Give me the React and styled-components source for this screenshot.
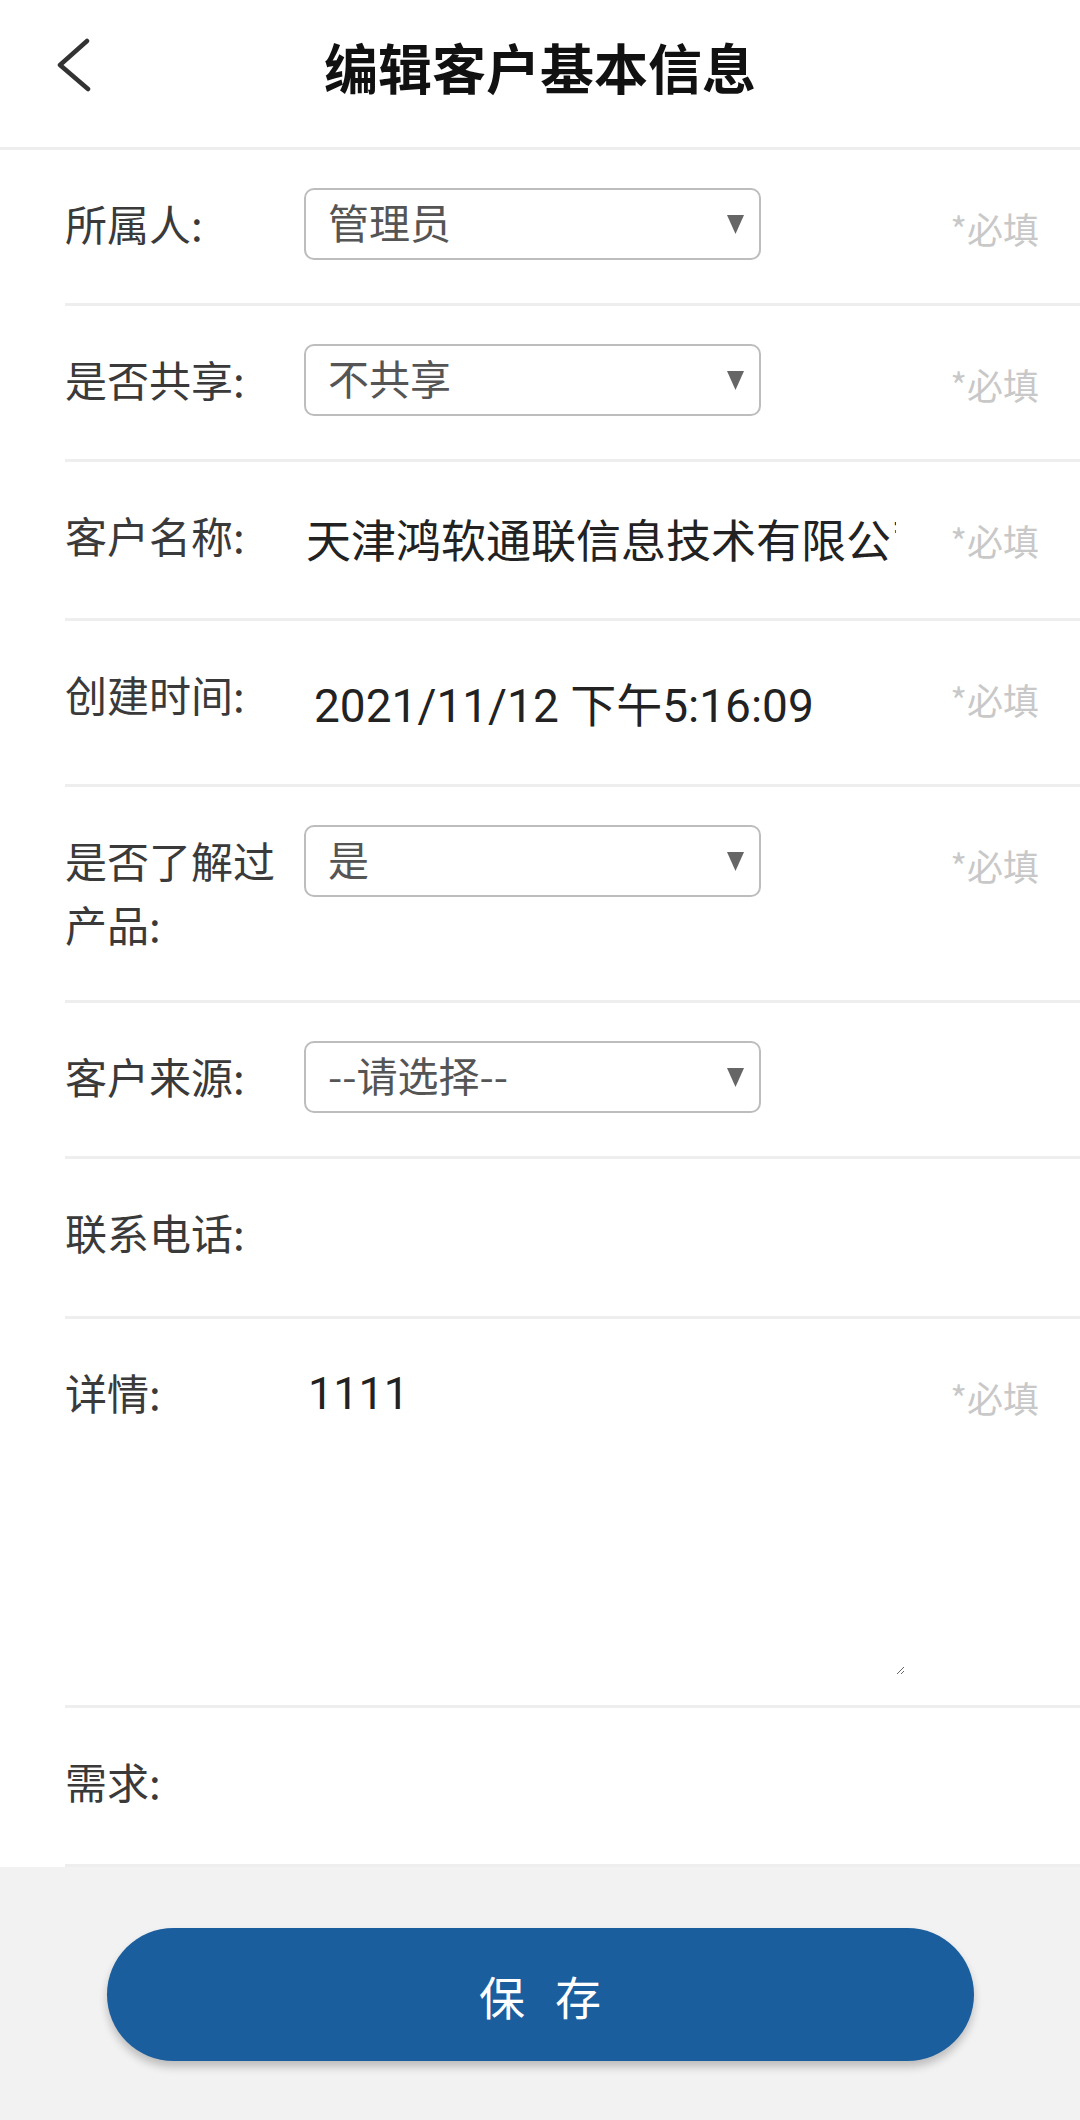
import React from 'react';
import styled, { createGlobalStyle } from 'styled-components';

const GlobalStyle = createGlobalStyle`
  body {
    margin: 0;
    background: #f2f2f2;
    font-family: "Noto Sans CJK SC", "Noto Sans", sans-serif;
  }
`;

const Page = styled.div`
  min-height: 100vh;
  background: #f2f2f2;
`;

const Header = styled.header`
  display: grid;
  grid-template-columns: 1fr auto 1fr;
  align-items: center;
  height: 147px;
  background: #fff;
  border-bottom: 3px solid #eeeeee;
`;

const BackButton = styled.button`
  justify-self: start;
  display: flex;
  margin: 0 0 15px 57px;
  padding: 0;
  border: none;
  background: transparent;
  cursor: pointer;
`;

const Title = styled.h1`
  margin: 0 0 15px;
  font-size: 54px;
  font-weight: 700;
  color: #111;
`;

const Form = styled.div`
  background: #fff;
`;

const Row = styled.div`
  display: flex;
  align-items: flex-start;
  margin-left: 65px;
  padding: 38px 0 ${(p) => p.$pb || 43}px;
  border-bottom: 3px solid #eeeeee;
`;

const Label = styled.div`
  flex: 0 0 239px;
  width: 239px;
  margin-top: 3px;
  font-size: 42px;
  line-height: 64px;
  color: #3a3a3a;
`;

const SelectBox = styled.div`
  display: flex;
  align-items: center;
  box-sizing: border-box;
  width: 457px;
  height: 72px;
  padding: 0 15px 6px 22px;
  border: 2px solid #bdbdbd;
  border-radius: 10px;
  font-size: 41px;
  color: #555;
`;

const Arrow = styled.svg`
  margin: 6px 0 0 auto;
  flex: none;
`;

const TextInput = styled.input`
  box-sizing: border-box;
  width: ${(p) => p.$w || 592}px;
  height: ${(p) => p.$h || 75}px;
  padding: ${(p) => p.$pt || 1}px 0 0 ${(p) => p.$pl || 2}px;
  border: none;
  outline: none;
  background: transparent;
  font-family: "Roboto", "Noto Sans CJK SC", sans-serif;
  font-size: ${(p) => p.$fs || 45}px;
  color: #222;
`;

const TextArea = styled.textarea`
  box-sizing: border-box;
  width: 601px;
  height: 318px;
  padding: 10px 4px;
  border: none;
  outline: none;
  background: transparent;
  font-family: "Roboto", "Noto Sans CJK SC", sans-serif;
  font-size: 45px;
  color: #222;
`;

const Required = styled.span`
  margin: 15px 41px 0 auto;
  font-size: 36px;
  line-height: 50px;
  color: #c8c8c8;
  white-space: nowrap;
`;

const Footer = styled.div`
  display: flex;
  justify-content: center;
  padding: 61px 0 60px;
`;

const SaveButton = styled.button`
  width: 867px;
  height: 133px;
  padding: 0 0 0 30px;
  border: none;
  border-radius: 67px;
  background: #1b5e9e;
  box-shadow: 0 6px 9px rgba(0, 0, 0, 0.22);
  color: #fff;
  font-family: "Noto Sans CJK SC", sans-serif;
  font-size: 46px;
  letter-spacing: 30px;
  cursor: pointer;
`;

const Select = ({ value }) => (
  <SelectBox>
    <span>{value}</span>
    <Arrow width="17" height="19" viewBox="0 0 17 19">
      <polygon points="0,0 17,0 8.5,19" fill="#666" />
    </Arrow>
  </SelectBox>
);

const App = () => {
  return (
    <Page>
      <GlobalStyle />
      <Header>
        <BackButton aria-label="返回">
          <svg width="36" height="56" viewBox="0 0 36 56">
            <polyline
              points="30,3 3,27 31,51"
              fill="none"
              stroke="#333"
              strokeWidth="4.5"
              strokeLinecap="round"
              strokeLinejoin="round"
            />
          </svg>
        </BackButton>
        <Title>编辑客户基本信息</Title>
        <div />
      </Header>

      <Form>
        <Row>
          <Label>所属人:</Label>
          <Select value="管理员" />
          <Required>*必填</Required>
        </Row>
        <Row>
          <Label>是否共享:</Label>
          <Select value="不共享" />
          <Required>*必填</Required>
        </Row>
        <Row>
          <Label>客户名称:</Label>
          <TextInput defaultValue="天津鸿软通联信息技术有限公司" />
          <Required>*必填</Required>
        </Row>
        <Row>
          <Label>创建时间:</Label>
          <TextInput $h={82} $pt={4} $pl={10} $fs={46} defaultValue="2021/11/12 下午5:16:09" />
          <Required>*必填</Required>
        </Row>
        <Row $pb={44}>
          <Label>是否了解过产品:</Label>
          <Select value="是" />
          <Required>*必填</Required>
        </Row>
        <Row>
          <Label>客户来源:</Label>
          <Select value="--请选择--" />
        </Row>
        <Row>
          <Label>联系电话:</Label>
          <TextInput $h={76} />
        </Row>
        <Row $pb={30}>
          <Label>详情:</Label>
          <TextArea defaultValue="1111" />
          <Required>*必填</Required>
        </Row>
        <Row>
          <Label>需求:</Label>
          <TextInput />
        </Row>
      </Form>

      <Footer>
        <SaveButton>保存</SaveButton>
      </Footer>
    </Page>
  );
};

export default App;
